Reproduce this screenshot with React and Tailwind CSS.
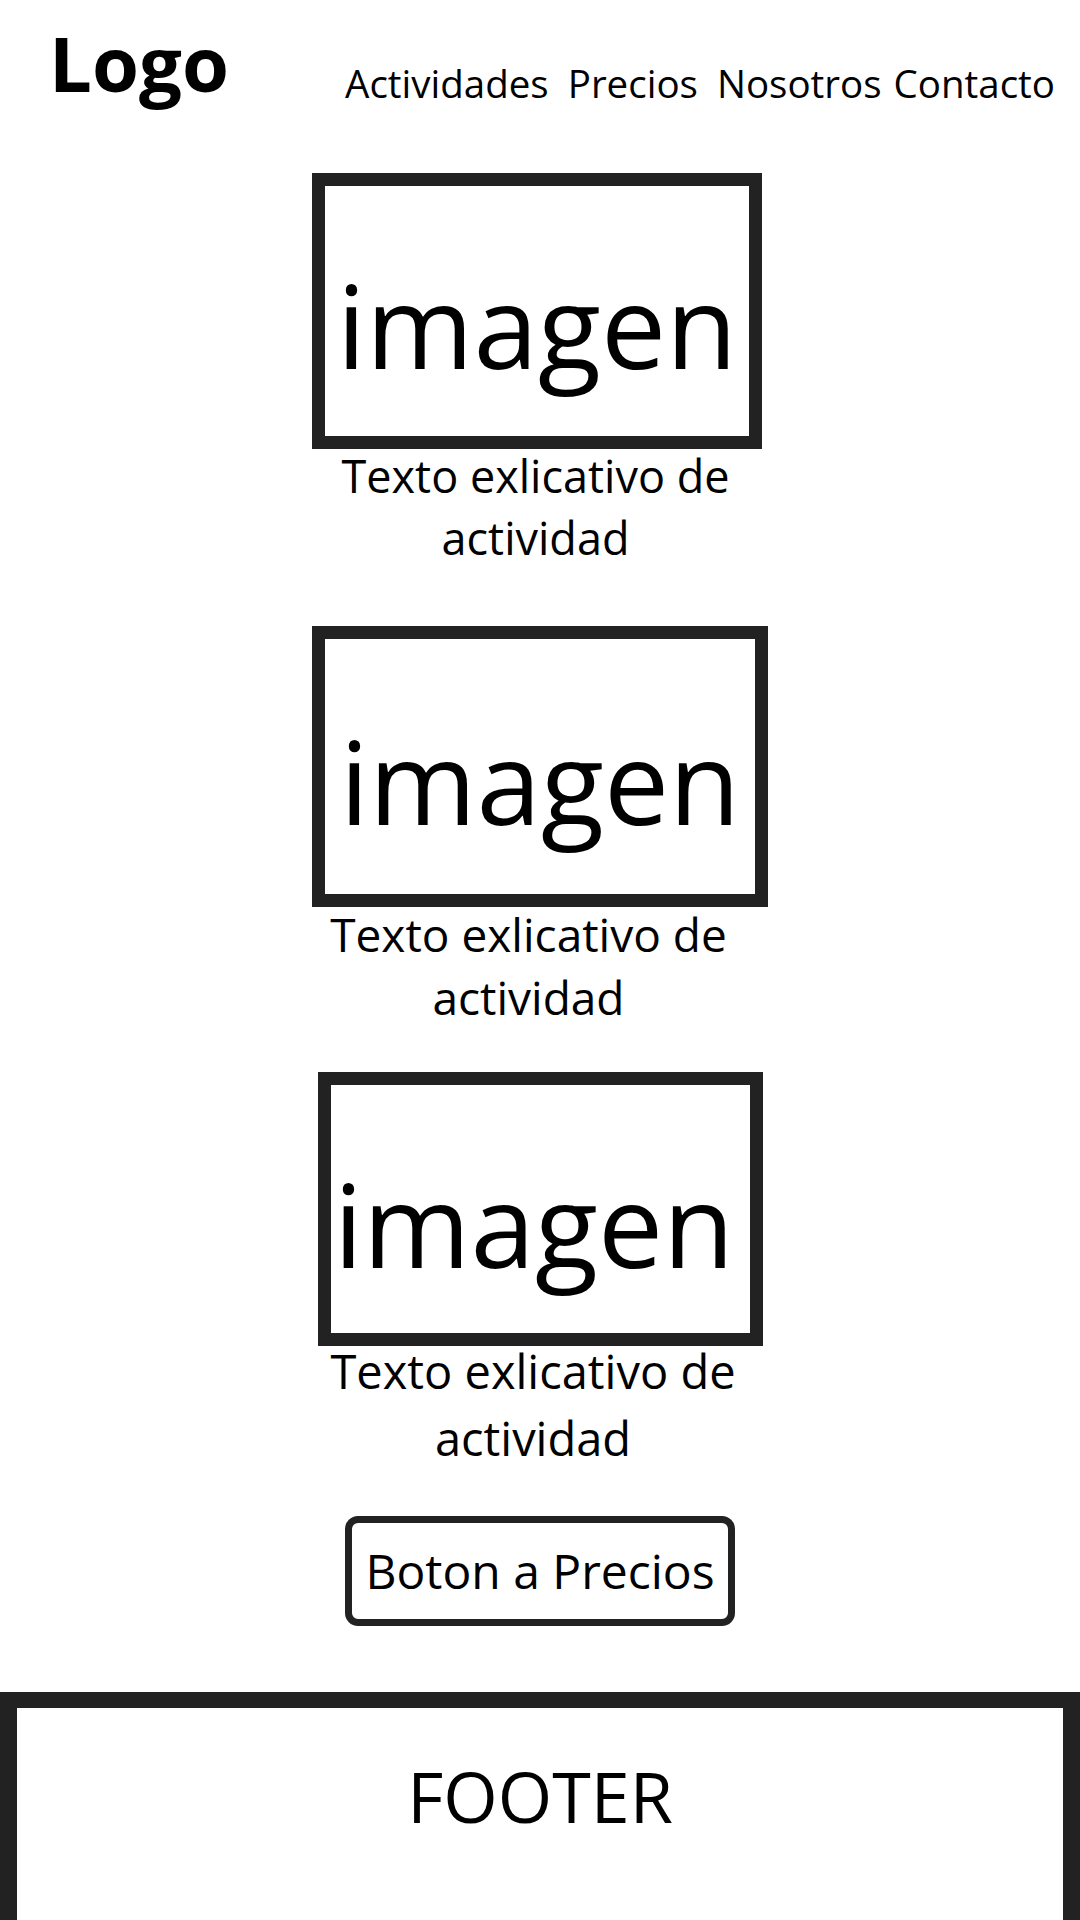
const CARDS = [
  { box: 'w-[450px] h-[276px] pt-[80px] mr-[6px]', caption: 'text-[45px] leading-[62px] -mt-[4px] mr-[9px]', gap: 'mt-[70px]' },
  { box: 'w-[456px] h-[281px] pt-[83px]', caption: 'text-[46px] leading-[63px] -mt-[4px] mr-[23px]', gap: 'mt-[57px]' },
  { box: 'w-[445px] h-[274px] pt-[80px] pr-[12px]', caption: 'text-[47px] leading-[67px] -mt-[8px] mr-[14px]', gap: 'mt-[43px]' }
];

// Wireframe-style landing: logo + nav, three activity placeholders, CTA and footer.
export default function App() {
  return (
    <div className="min-h-[1920px] bg-white text-black font-['Open_Sans',sans-serif] overflow-hidden">
      <header className="flex items-start justify-between h-[103px] pt-[25px] pl-[49px] pr-[25px]">
        <div className="text-[76px] leading-[76px] font-bold">Logo</div>
        <nav className="flex mt-[39px] text-[38.5px] leading-[39px]">
          <a>Actividades</a>
          <a className="ml-[19px]">Precios</a>
          <a className="ml-[19px]">Nosotros</a>
          <a className="ml-[12px]">Contacto</a>
        </nav>
      </header>

      <main className="flex flex-col items-center">
        {CARDS.map((card, i) => (
          <section key={i} className={`flex flex-col items-center ${card.gap}`}>
            <div className={`flex justify-center border-[13px] border-[#222] ${card.box}`}>
              <span className="text-[116px] leading-[116px]">imagen</span>
            </div>
            <p className={`w-[460px] text-center ${card.caption}`}>Texto exlicativo de actividad</p>
          </section>
        ))}

        <button className="mt-[44px] w-[390px] h-[110px] flex items-center justify-center border-[7px] border-[#222] rounded-[13px] text-[48px] leading-[48px]">
          Boton a Precios
        </button>
      </main>

      <footer className="mt-[66px] h-[228px] border-t-[16px] border-x-[17px] border-[#222] flex justify-center pt-[53px]">
        <span className="text-[70px] leading-[70px]">FOOTER</span>
      </footer>
    </div>
  );
}
